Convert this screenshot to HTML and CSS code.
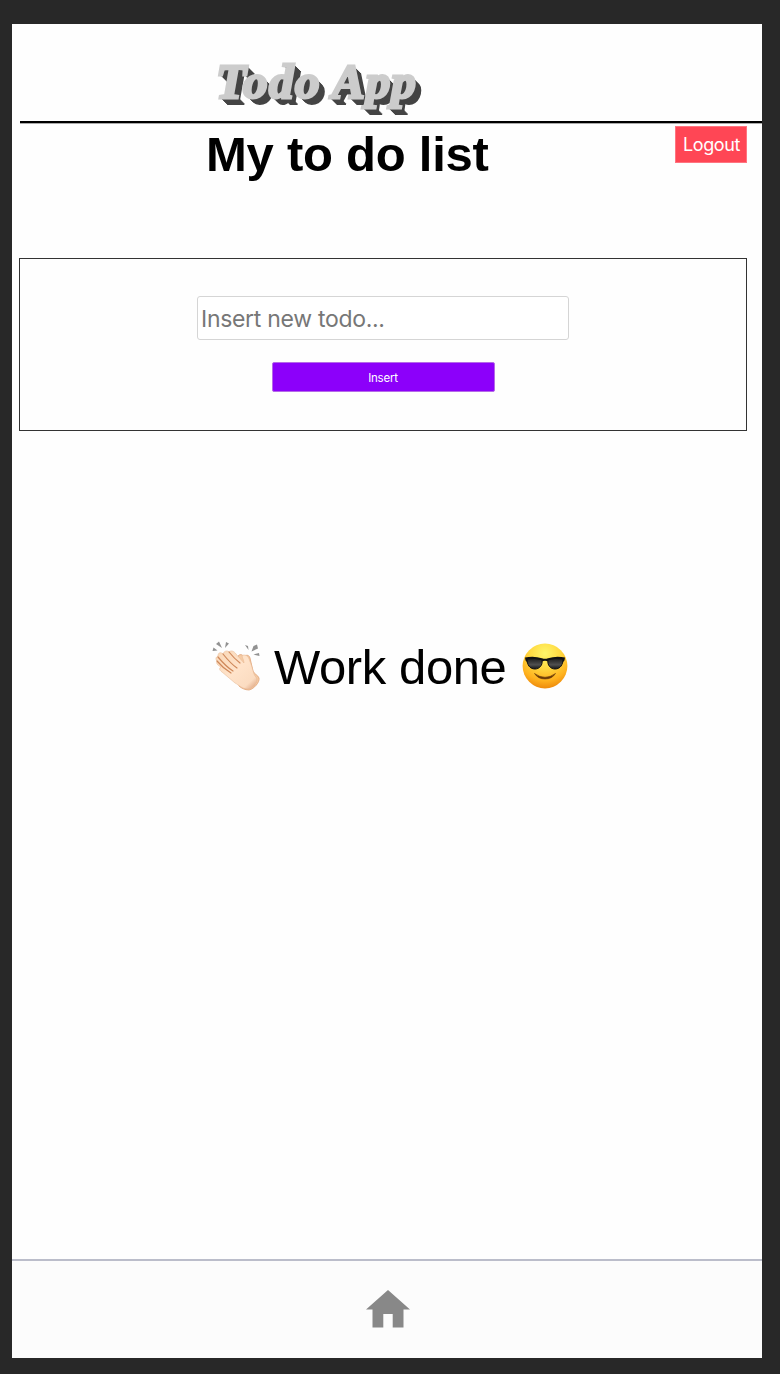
FILE: index.html
```html
<!DOCTYPE html>
<html lang="en">
<head>
<meta charset="utf-8">
<title>Todo App</title>
<link rel="stylesheet" href="styles.css">
</head>
<body>
<div class="app">
  <header class="brand"><span class="logo"><span class="word todo">Todo</span><span class="word apps">App</span></span></header>
  <div class="titlebar">
    <h1>My to do list</h1>
    <button class="logout">Logout</button>
  </div>
  <form class="entry">
    <input class="field" type="text" placeholder="Insert new todo...">
    <button class="insert" type="button">Insert</button>
  </form>
  <main class="done">
    <svg class="clap" width="50" height="50" viewBox="0 0 50 50" role="img" aria-label="Clapping hands">
      <defs>
        <linearGradient id="skin" x1="0" y1="0" x2="1" y2="1"><stop offset="0" stop-color="#f9d8b7"/><stop offset=".5" stop-color="#ffe3ca"/><stop offset=".82" stop-color="#fbdcc1"/><stop offset="1" stop-color="#d89b77"/></linearGradient>
      </defs>
      <g fill="#929292"><path d="M7 .5l3 6.500-6-4zM1.500 6.500l4 3-5 .5zM14 1l3 1.500-4 4.500zM33 4l3 1 .5 4zM45 3.500l1 4-6.500 3 2-5.500zM47 12l.5 3-6-1.500z"/></g>
      <path d="M26 15c2-2 4-2 6 1 1-2 5-3 6 1l3 13c1 3 5 4 6 7 1 4-5 11-10 12-4 0-8-2-10-4z" fill="#f5cba5" stroke="#dfa277" stroke-width=".8"/>
      <path d="M6 15c0-4 3-4 5-2 1-3 4-4 6-2 2-2 5-1 7 2l8 9c0-4-4-8 0-8 5 0 5 5 7 9l3 10c1 3 3 3 3 6 0 4-5 9-9 9-6 0-9-4-13-6L10 31c-3-2-3-4-1-5-4-2-5-4-4-6-2-2-1-4 1-5z" fill="url(#skin)" stroke="#e5b48e" stroke-width=".5"/>
      <path d="M11 13c4 5 8 10 14 14M6 16c5 6 10 11 15 14M5 20c5 6 9 9 14 12M17 11c4 5 7 8 11 11" fill="none" stroke="#cf885a" stroke-width="1.200" stroke-linecap="round"/>
    </svg>
    <span class="message">Work done</span>
    <svg class="cool" width="46" height="46" viewBox="0 0 46 46" role="img" aria-label="Smiling face with sunglasses">
      <defs>
        <radialGradient id="face" cx=".5" cy=".22" r=".8"><stop offset="0" stop-color="#fff66a"/><stop offset=".4" stop-color="#ffdb43"/><stop offset=".75" stop-color="#ffb31f"/><stop offset="1" stop-color="#ec860a"/></radialGradient>
        <linearGradient id="lens" x1="0" y1="0" x2="0" y2="1"><stop offset="0" stop-color="#1c1c1c"/><stop offset=".6" stop-color="#505050"/><stop offset="1" stop-color="#151515"/></linearGradient>
      </defs>
      <circle cx="23" cy="23" r="22.400" fill="url(#face)"/>
      <path d="M12.500 30.500q10.500 7.500 21 0-3.500 5.500-10.500 5.500t-10.500-5.500z" fill="#6c3a08" stroke="#6c3a08" stroke-width=".6"/>
      <path d="M3 14.500q9-2 17 .8 3 1 6 0 8-2.800 17-.8l-.5 3q-1 .5-1.500 2l-15-1q-3-1.500-6 0l-15 1q-.5-1.500-1.500-2z" fill="#111"/>
      <path d="M5 16q8-1.500 15 .8c1 6-3 9.200-7 9.200C7.500 26 5 21.500 5 16zM41 16q-8-1.500-15 .8c-1 6 3 9.200 7 9.200 5.500 0 8-4.500 8-10z" fill="url(#lens)" stroke="#111"/>
    </svg>
  </main>
  <nav class="tabs">
    <svg width="44" height="38" viewBox="0 0 44 38" fill="#888"><path d="M22 0L44 19.500H37.500V37.500H26.700V24H17.300V37.500H6.500V19.500H0z"/></svg>
  </nav>
</div>
</body>
</html>
```

FILE: styles.css
```css
* { box-sizing: border-box; }
body {
  margin: 0;
  padding: 24px 18px 16px 12px;
  height: 1374px;
  background: #282828;
  font-family: "Liberation Sans", Arial, sans-serif;
}
.app {
  display: flex;
  flex-direction: column;
  height: 1334px;
  background: #fefefe;
  overflow: hidden;
}
.brand {
  height: 99px;
  margin-left: 8px;
  padding: 31px 0 0 196px;
  border-bottom: 2px solid #000;
  box-shadow: 0 1px #aaa;
}
.logo {
  display: flex;
  color: #ccc;
  font: italic 700 49px/54px "Liberation Serif", serif;
}
.word {
  -webkit-text-stroke: 3px #ccc;
  text-shadow: 1px 1px #444, 2px 2px #444, 3px 3px #444, 4px 4px #444, 5px 5px #444, 6px 6px #444, 7px 7px #444;
}
.todo { width: 116px; letter-spacing: 1.5px; }
.apps { letter-spacing: 1px; }
.titlebar {
  display: flex;
  justify-content: space-between;
  height: 135px;
  padding: 3px 15px 0 194px;
  flex: none;
}
h1 {
  margin: 0;
  font-size: 49px;
  line-height: 57px;
  letter-spacing: -0.25px;
  white-space: nowrap;
}
.logout {
  width: 72px;
  height: 37px;
  padding: 0 0 0 1px;
  border: 1px solid #ff7480;
  background: #ff4655;
  color: #fff;
  font: 18px Inter, sans-serif;
  letter-spacing: -0.35px;
}
.entry {
  display: flex;
  flex-direction: column;
  align-items: center;
  height: 173px;
  margin: 0 15px 0 7px;
  padding-top: 37px;
  border: 1px solid #333;
  flex: none;
}
.field {
  width: 372px;
  height: 44px;
  padding: 2px 3px 0;
  border: 1px solid #d5d5d5;
  border-radius: 3px;
  background: #fff;
  font: 23px Inter, sans-serif;
  letter-spacing: -0.3px;
}
.field::placeholder { color: #777; opacity: 1; }
.insert {
  width: 223px;
  height: 30px;
  margin-top: 22px;
  padding: 1px 0 0;
  border: 1px solid #b56ae8;
  border-radius: 2px;
  background: #8c00fa;
  color: #fff;
  font: 11.5px Inter, sans-serif;
  letter-spacing: -0.2px;
}
.done {
  display: flex;
  flex: 1;
  align-items: flex-start;
  padding: 209px 0 0 200px;
}
.message {
  margin: 0 16px 0 12px;
  font-size: 49px;
  line-height: 55px;
  letter-spacing: -0.4px;
  white-space: nowrap;
}
.clap, .cool { flex: none; margin-top: 1px; }
.cool { margin-top: 3px; }
.tabs {
  display: flex;
  justify-content: center;
  height: 99px;
  padding: 29px 0 0 1px;
  border-top: 2px solid #bbbdca;
  background: #fcfcfc;
  flex: none;
}
```
